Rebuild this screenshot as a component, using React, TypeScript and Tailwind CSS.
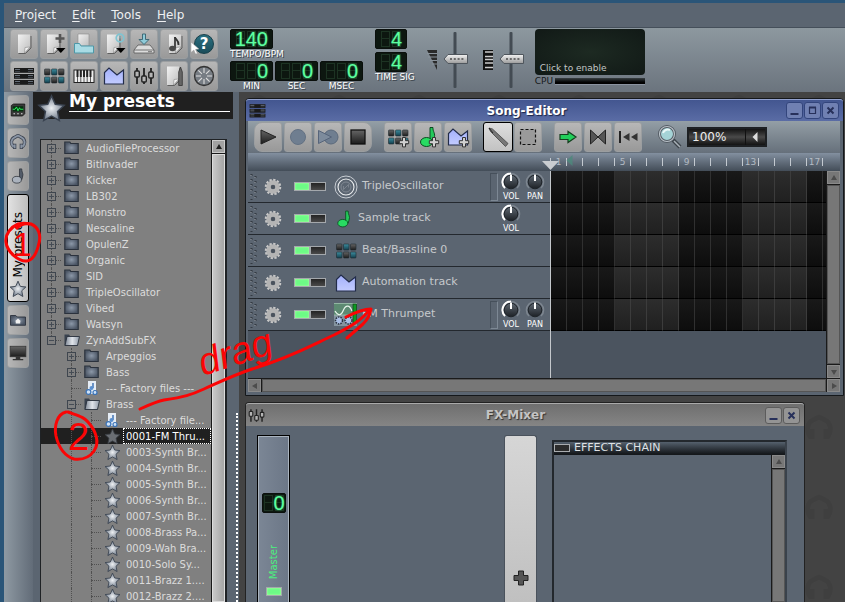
import type { ReactNode } from "react";
import clsx from "clsx";

/* ---------- shared gradients ---------- */

function Defs() {
  return (
    <svg className="absolute size-0" aria-hidden="true">
      <defs>
        <linearGradient id="paper" x1="0" y1="0" x2="1" y2="1">
          <stop offset="0" stopColor="#f2f2f2" />
          <stop offset="1" stopColor="#bdbdbd" />
        </linearGradient>
        <linearGradient id="lilac" x1="0" y1="0" x2="0" y2="1">
          <stop offset="0" stopColor="#a3b0fb" />
          <stop offset="1" stopColor="#c3ccff" />
        </linearGradient>
        <radialGradient id="steel">
          <stop offset="0" stopColor="#eef1f4" />
          <stop offset="1" stopColor="#707b8a" />
        </radialGradient>
        <radialGradient id="folder">
          <stop offset="0" stopColor="#8c98a8" />
          <stop offset="1" stopColor="#4c5665" />
        </radialGradient>
        <linearGradient id="folderOpen" x1="0" y1="0" x2="1" y2="0">
          <stop offset="0" stopColor="#7d8795" />
          <stop offset="0.5" stopColor="#e0e4ea" />
          <stop offset="1" stopColor="#8f99a7" />
        </linearGradient>
        <linearGradient id="thumb" x1="0" y1="0" x2="0" y2="1">
          <stop offset="0" stopColor="#f4f4f4" />
          <stop offset="1" stopColor="#9a9a9a" />
        </linearGradient>
        <linearGradient id="knob" x1="0" y1="0" x2="0" y2="1">
          <stop offset="0" stopColor="#5d6670" />
          <stop offset="1" stopColor="#1d2126" />
        </linearGradient>
        <linearGradient id="dark" x1="0" y1="0" x2="0" y2="1">
          <stop offset="0" stopColor="#666" />
          <stop offset="1" stopColor="#1c1c1c" />
        </linearGradient>
        <linearGradient id="teal" x1="0" y1="0" x2="0" y2="1">
          <stop offset="0" stopColor="#3e8ea0" />
          <stop offset="1" stopColor="#123e4c" />
        </linearGradient>
      </defs>
    </svg>
  );
}

/* ---------- icons ---------- */

function Svg({ size = 24, children }: { size?: number; children: ReactNode }) {
  return (
    <svg width={size} height={size} viewBox="0 0 24 24" fill="none" aria-hidden="true" className="shrink-0">
      {children}
    </svg>
  );
}

const Page = ({ x = 0 }: { x?: number }) => (
  <g transform={`translate(${x} 0)`}>
    <path d="M6.500 21.500h7l5.500-5.500v-12" stroke="#5f5f5f" strokeWidth="1" />
    <path d="M6 2.500h12v12.500l-5.500 6h-6.500z" fill="url(#paper)" />
    <path d="M12.500 21l.5-5.500 5-.5z" fill="#f0f0f0" stroke="#8a8a8a" strokeWidth=".6" />
  </g>
);

const DropArrow = () => <path d="M14 16h9.500l-4.700 5z" fill="#000" />;

const NewIcon = () => (
  <Svg>
    <Page />
  </Svg>
);

const TemplateIcon = () => (
  <Svg>
    <Page x={-1} />
    <path d="M18 2v9M13.500 6.500h9" stroke="#555" strokeWidth="2.600" />
    <DropArrow />
  </Svg>
);

const OpenIcon = () => (
  <Svg>
    <path d="M6 2h11v12h-11z" fill="url(#paper)" stroke="#8b8b8b" strokeWidth=".6" />
    <path d="M2.500 21v-9.500h5l1.500 2.500h12.500v7z" fill="#a9dbe4" stroke="#4d98a8" />
  </Svg>
);

const RecentIcon = () => (
  <Svg>
    <Page x={-1} />
    <circle cx="18" cy="6" r="3.800" stroke="#7fc4d2" strokeWidth="1.700" />
    <path d="M18 4v2.500" stroke="#7fc4d2" />
    <DropArrow />
  </Svg>
);

const SaveIcon = () => (
  <Svg>
    <path d="M6 13h12l4 5v3h-20v-3z" fill="#dcdcdc" stroke="#555" strokeWidth=".8" />
    <path d="M2 18h20M16 19.700h4" stroke="#666" strokeWidth=".9" />
    <path d="M10.500 2h3v5.500h3.500l-5 5-5-5h3.500z" fill="#8fcbd9" stroke="#35616e" strokeWidth=".9" />
  </Svg>
);

const ExportIcon = () => (
  <Svg>
    <Page x={1} />
    <path d="M13 5v11" stroke="#333" strokeWidth="1.700" />
    <path d="M13 5c0 2.500 4 3 3.500 8" stroke="#333" strokeWidth="1.800" />
    <ellipse cx="10.500" cy="16.500" rx="3.400" ry="2.700" fill="#4a4a4a" />
  </Svg>
);

const HelpIcon = () => (
  <div className="relative flex size-6 items-center justify-center">
    <div className="flex size-5 items-center justify-center rounded-full border border-[#173f49] bg-linear-to-b from-[#2a7081] to-[#1c4d5a] text-[15px] leading-none font-bold text-white">
      ?
    </div>
    <svg className="absolute -left-0.5 top-2.5" width="10" height="12" viewBox="0 0 10 12" aria-hidden="true">
      <path d="M1 0l8 7-3.500.5 2 4-2 .5-1.700-4-2.800 2.500z" fill="#fff" stroke="#999" strokeWidth=".5" />
    </svg>
  </div>
);

const SongIcon = ({ size = 24 }: { size?: number }) => (
  <Svg size={size}>
    {[4, 10, 16].map((y) => (
      <g key={y}>
        <rect x="2" y={y} width="20" height="4.800" fill="#1a1a1a" />
        <path d={`M3 ${y + 1.500}h5M16 ${y + 1.500}h5`} stroke="#666e78" strokeWidth="1.200" />
        <path d={`M3 ${y + 3.500}h5M16 ${y + 3.500}h5`} stroke="#3c424a" strokeWidth="1" />
      </g>
    ))}
  </Svg>
);

const PlusMark = () => (
  <path
    d="M16.500 12.500h3v3.200h3.200v3h-3.200v3.200h-3v-3.200h-3.200v-3h3.200z"
    fill="#d0d0d0"
    stroke="#333"
    strokeWidth="1"
  />
);

const BeatIcon = ({ plus = false }: { plus?: boolean }) => (
  <Svg>
    {[0, 1, 2].map((col) =>
      [0, 1].map((row) => (
        <rect
          key={`${col}${row}`}
          x={2.500 + col * 7}
          y={5 + row * 8}
          width="5.500"
          height="6"
          rx=".8"
          fill={(col + row) % 2 === 1 || (col === 2 && row === 1) ? "url(#teal)" : "url(#dark)"}
          stroke="#1f2a2f"
          strokeWidth=".6"
        />
      )),
    )}
    {plus && <PlusMark />}
  </Svg>
);

const PianoIcon = () => (
  <Svg>
    <rect x="2" y="6" width="20" height="12.500" fill="#eee" stroke="#222" />
    <path d="M5.500 6v12M8.800 6v12M12 6v12M15.200 6v12M18.500 6v12" stroke="#333" strokeWidth=".8" />
    <path d="M5.500 6v7M8.800 6v7M12 6v7M15.200 6v7M18.500 6v7" stroke="#222" strokeWidth="2" />
  </Svg>
);

const AutomationIcon = ({ plus = false }: { plus?: boolean }) => (
  <Svg>
    <path d="M2.500 20v-11.500l4.500-4.500 8 7 6.500-5v14z" fill="url(#lilac)" stroke="#222c4a" strokeWidth="1.200" />
    {plus && <PlusMark />}
  </Svg>
);

const MixerIcon = ({ size = 24 }: { size?: number }) => (
  <Svg size={size}>
    <path d="M5 4v16M12 4v16M19 4v16" stroke="#222" strokeWidth="1.800" />
    <rect x="2.800" y="7" width="4.500" height="6" rx="1" fill="#b5b5b5" stroke="#222" strokeWidth="1.400" />
    <rect x="9.800" y="12" width="4.500" height="6" rx="1" fill="#b5b5b5" stroke="#222" strokeWidth="1.400" />
    <rect x="16.800" y="8" width="4.500" height="6" rx="1" fill="#b5b5b5" stroke="#222" strokeWidth="1.400" />
  </Svg>
);

const NotesIcon = () => (
  <Svg>
    <Page x={-1} />
    <path d="M18.500 3l1.800 5v13.500h-3.600v-13.500z" fill="#666" stroke="#333" strokeWidth=".8" />
  </Svg>
);

const RackIcon = () => (
  <Svg>
    <circle cx="12" cy="12" r="9.500" fill="#777d84" stroke="#333" strokeWidth="1.300" />
    <path
      d="M12 4v5M12 15v5M4 12h5M15 12h5M6.300 6.300l3.600 3.600M14 14l3.600 3.600M17.600 6.300l-3.600 3.600M10 14l-3.600 3.600"
      stroke="#ddd"
      strokeWidth="1.100"
    />
  </Svg>
);

const STAR = "M12 1.500l3.100 7 7.400.8-5.500 5.100 1.500 7.600-6.500-3.800-6.500 3.800 1.500-7.600-5.500-5.100 7.400-.8z";

const StarIcon = ({ size = 18, dim = false }: { size?: number; dim?: boolean }) => (
  <Svg size={size}>
    <path d={STAR} fill={dim ? "#6a6e73" : "url(#steel)"} stroke={dim ? "#3a3e44" : "#3a4350"} strokeWidth="1.200" />
  </Svg>
);

const FolderIcon = ({ open = false }: { open?: boolean }) => (
  <svg width="16" height="16" viewBox="0 0 16 16" aria-hidden="true" className="shrink-0">
    {open ? (
      <>
        <path d="M.5 13.500v-11h4.500l1 1.500h8v9.500z" fill="#39424f" />
        <path d="M3 4.500h12.500l-2 9h-12.500z" fill="url(#folderOpen)" stroke="#2b323d" strokeWidth=".9" />
      </>
    ) : (
      <path d="M.8 13.500v-11.500h5l1 1.500h7.400v10z" fill="url(#folder)" stroke="#2b323d" strokeWidth="1.200" />
    )}
  </svg>
);

const FactoryIcon = () => (
  <svg width="16" height="16" viewBox="0 0 16 16" aria-hidden="true" className="shrink-0">
    <path d="M4 1h8v11l-2 2h-6z" fill="#e6edf6" />
    <path d="M9 3v5" stroke="#356bb0" strokeWidth="1.400" />
    <circle cx="7.500" cy="8" r="2" fill="#5b90cf" />
    <circle cx="4.500" cy="12" r="2.400" fill="#cfe2f7" stroke="#3a73b8" strokeWidth="1.200" />
    <circle cx="11" cy="12.500" r="2" fill="#cfe2f7" stroke="#3a73b8" strokeWidth="1.200" />
  </svg>
);

const Note = ({ green = false }: { green?: boolean }) => (
  <g stroke={green ? "#0b4a20" : "#2c323a"} strokeWidth="1">
    <path d="M14 2.500h3c-.5 4 3 6 1 11l-1 3.500h-3z" fill={green ? "#24c95a" : "#525b68"} />
    <ellipse cx="10.500" cy="17" rx="6" ry="4.500" fill={green ? "#28dc62" : "#aab2bd"} />
  </g>
);

const GearIcon = () => (
  <Svg size={18}>
    <circle cx="12" cy="12" r="9.500" stroke="#c9c9c9" strokeWidth="3" strokeDasharray="3 1.970" />
    <circle cx="12" cy="12" r="6" stroke="#b4b4b4" strokeWidth="6" />
    <circle cx="12" cy="12" r="2.800" fill="#4a525c" />
  </Svg>
);

const OscIcon = () => (
  <Svg>
    <circle cx="12" cy="12" r="11" stroke="#c9ced4" strokeWidth="1" />
    <circle cx="12" cy="12" r="8" stroke="#eceef0" strokeWidth="1.100" />
    <circle cx="12" cy="12" r="5" stroke="#89919a" strokeWidth=".8" />
    <path d="M9.500 14.500l5-5M9.500 11v3.500M14.500 9.500v3" stroke="#89919a" strokeWidth=".7" />
  </Svg>
);

const ZynIcon = () => (
  <Svg>
    <rect width="23" height="12" fill="#5d8a72" />
    <rect y="12" width="23" height="11" fill="#85949f" />
    <path d="M0 12h23M0 .5h23" stroke="#9fc0ae" strokeWidth=".8" />
    <path d="M1 8c3 5 6 5 8 0s6-8 9 0" stroke="#e8f5ec" strokeWidth="1.200" />
    <rect x="19" y="1" width="3.500" height="19" fill="#0d9b22" stroke="#0a3311" strokeWidth=".6" />
    <circle cx="5" cy="17.500" r="3.500" fill="#a9bfe6" stroke="#2b3442" strokeWidth="1.500" strokeDasharray="1.500 1" />
    <circle cx="14.500" cy="17.500" r="3.500" fill="#a9bfe6" stroke="#2b3442" strokeWidth="1.500" strokeDasharray="1.500 1" />
  </Svg>
);

const Headphones = () => (
  <g fill="none">
    <path
      d="M6 17c-5-5-2.500-11 1.500-12.500l4.500-2.500 4.500 2.500c4 1.500 6.500 7.500 1.500 12.500"
      stroke="#3c4350"
      strokeWidth="4.500"
    />
    <path d="M7.500 13v7M16.500 13v7" stroke="#3c4350" strokeWidth="4.500" />
    <path
      d="M6 17c-5-5-2.500-11 1.500-12.500l4.500-2.500 4.500 2.500c4 1.500 6.500 7.500 1.500 12.500"
      stroke="#8a95a5"
      strokeWidth="2.500"
    />
    <path d="M7.500 14v5M16.500 14v5" stroke="#8a95a5" strokeWidth="2.500" />
  </g>
);

/* ---------- small widgets ---------- */

function ToolButton({
  label,
  active,
  className,
  children,
}: {
  label: string;
  active?: boolean;
  className?: string;
  children: ReactNode;
}) {
  return (
    <button
      type="button"
      aria-label={label}
      className={clsx(
        "flex h-[30px] w-7 items-center justify-center rounded-[3px] border",
        active
          ? "border-black bg-linear-to-b from-[#dedede] to-[#c2c2c2]"
          : "border-[#9b9ea0] bg-linear-to-b from-[#b7b7b7] to-[#999]",
        className,
      )}
    >
      {children}
    </button>
  );
}

function Lcd({ value, digits, className }: { value: string; digits: number; className?: string }) {
  return (
    <div
      className={clsx(
        "relative flex h-5 items-center justify-center rounded-[2px] border border-[#0a0f0c] bg-[#0d1710]",
        className,
      )}
    >
      {Array.from({ length: digits }, (_, i) => (
        <div key={i} className="flex w-[11px] flex-col px-px">
          <div className="h-2 border border-[#1d3323]" />
          <div className="h-2 border border-t-0 border-[#1d3323]" />
        </div>
      ))}
      <div
        className={clsx(
          "absolute inset-0 flex items-center justify-end font-['Liberation_Sans'] text-[20px] leading-5 text-[#5dffa0] [text-shadow:0_0_2px_#2fb868]",
          digits === 2 && value === "0" ? "pr-0" : "pr-1",
        )}
      >
        {value}
      </div>
    </div>
  );
}

function LcdLabel({ children }: { children: ReactNode }) {
  return (
    <span className="text-center text-[9px] leading-[11px] text-white [text-shadow:1px_1px_0_#3c444c]">{children}</span>
  );
}

function VerticalSlider({ label }: { label: string }) {
  return (
    <label className="relative block h-14 w-[26px]">
      <svg width="26" height="56" viewBox="0 0 26 56" aria-hidden="true">
        <rect x="10.500" y="0" width="3" height="56" rx="1" fill="#434b53" />
        <path d="M1 27l4-4.500h19.500v9h-19.500z" fill="url(#thumb)" stroke="#4f565d" strokeWidth="1" />
        <path d="M7 27h14" stroke="#6a6a6a" strokeWidth="2" strokeDasharray="2 1.800" />
      </svg>
      <input type="range" aria-label={label} className="absolute inset-0 h-full w-full opacity-0" />
    </label>
  );
}

function Led({ label, on }: { label: string; on?: boolean }) {
  return (
    <input
      type="checkbox"
      aria-label={label}
      defaultChecked={on}
      className="h-[9px] w-4 appearance-none border border-[#a4a8ac] bg-linear-to-b from-[#242424] to-[#4a4a4a] checked:bg-none checked:bg-[#6dfb86] checked:shadow-[inset_0_0_2px_#c8ffb0]"
    />
  );
}

function Knob({ label, full }: { label: string; full?: boolean }) {
  return (
    <label className="relative flex w-6 flex-col items-center">
      <svg width="20" height="20" viewBox="0 0 20 20" fill="none" aria-hidden="true">
        <path d="M4 16a8.500 8.500 0 1 1 12 0" stroke="#7d8690" strokeWidth="1.600" />
        {full && <path d="M4 16a8.500 8.500 0 0 1 6-14.500" stroke="#fff" strokeWidth="2" />}
        <circle cx="10" cy="10" r="6.800" fill="url(#knob)" stroke="#1f2429" />
        <path d="M10 2.500v6.500" stroke="#fff" strokeWidth="2" />
      </svg>
      <span className="text-[8px] leading-[9px] text-white">{label}</span>
      <input type="range" aria-label={label} className="absolute inset-0 h-full w-full opacity-0" />
    </label>
  );
}

function ScrollButton({ dir, dim }: { dir: "up" | "down" | "left" | "right"; dim?: boolean }) {
  const paths = {
    up: "M3 8h6l-3-5z",
    down: "M3 4h6l-3 5z",
    left: "M8 3v6l-5-3z",
    right: "M4 3v6l5-3z",
  };
  return (
    <button
      type="button"
      aria-label={`Scroll ${dir}`}
      className={clsx(
        "flex size-[13px] shrink-0 items-center justify-center border",
        dim ? "border-[#8a8a8a] bg-[#777]" : "border-[#ccc] bg-[#a2a2a2]",
      )}
    >
      <svg width="12" height="12" viewBox="0 0 12 12" aria-hidden="true" className="shrink-0">
        <path d={paths[dir]} fill={dim ? "#4c4c4c" : "#222"} />
      </svg>
    </button>
  );
}

function WindowButton({ label, blue, children }: { label: string; blue?: boolean; children: ReactNode }) {
  return (
    <button
      type="button"
      aria-label={label}
      className={clsx(
        "flex size-[17px] items-center justify-center rounded-[3px] border",
        blue ? "border-[#33457c] bg-[#7080b2]" : "border-[#5c5c5c] bg-[#949494]",
      )}
    >
      <svg width="11" height="11" viewBox="0 0 11 11" fill="none" stroke="#27305a" strokeWidth="2" aria-hidden="true">
        {children}
      </svg>
    </button>
  );
}

const MinimizeGlyph = <path d="M1.500 9h8" />;
const MaximizeGlyph = (
  <>
    <path d="M2.500 2.500h6v6h-6z" strokeWidth="1.200" />
    <path d="M2 2.500h7" />
  </>
);
const CloseGlyph = <path d="M2.500 2.500l6 6M8.500 2.500l-6 6" />;

/* ---------- top of the main window ---------- */

function MenuBar() {
  return (
    <nav className="flex h-[25px] items-center gap-4 border-b border-[#454f5a] bg-[#5b6571] px-[11px] text-[12px]">
      {["Project", "Edit", "Tools", "Help"].map((item) => (
        <button key={item} type="button" className="leading-4 text-[#eef0f2]">
          <span className="underline underline-offset-2">{item[0]}</span>
          {item.slice(1)}
        </button>
      ))}
    </nav>
  );
}

const PROJECT_TOOLS: [string, ReactNode][] = [
  ["New project", <NewIcon />],
  ["New from template", <TemplateIcon />],
  ["Open project", <OpenIcon />],
  ["Recent projects", <RecentIcon />],
  ["Save project", <SaveIcon />],
  ["Export project", <ExportIcon />],
  ["What's this?", <HelpIcon />],
  ["Song editor", <SongIcon />],
  ["Beat editor", <BeatIcon />],
  ["Piano roll", <PianoIcon />],
  ["Automation editor", <AutomationIcon />],
  ["Mixer", <MixerIcon />],
  ["Project notes", <NotesIcon />],
  ["Controller rack", <RackIcon />],
];

function MainToolbar() {
  return (
    <header className="flex h-16 shrink-0 items-start bg-linear-to-b from-[#8d989f] to-[#6b747e] pt-px pl-1.5">
      <div className="grid grid-cols-7 gap-x-0.5 gap-y-0.5">
        {PROJECT_TOOLS.map(([label, icon]) => (
          <ToolButton key={label} label={label}>
            {icon}
          </ToolButton>
        ))}
      </div>

      <div className="ml-3 flex flex-col">
        <div className="flex h-8 flex-col items-start">
          <Lcd value="140" digits={3} className="w-[43px]" />
          <LcdLabel>TEMPO/BPM</LcdLabel>
        </div>
        <div className="flex gap-0.5">
          {["MIN", "SEC", "MSEC"].map((unit) => (
            <div key={unit} className="flex flex-col">
              <Lcd value="0" digits={3} className="w-[43px]" />
              <LcdLabel>{unit}</LcdLabel>
            </div>
          ))}
        </div>
      </div>

      <div className="ml-3 flex flex-col items-start">
        <Lcd value="4" digits={2} className="mb-[3px] w-8" />
        <Lcd value="4" digits={2} className="w-8" />
        <LcdLabel>TIME SIG</LcdLabel>
      </div>

      <div className="ml-3 flex items-center gap-1.5 pt-[3px]">
        <svg width="10" height="20" viewBox="0 0 10 20" aria-hidden="true">
          <path d="M0 0h10v20z" fill="#2a2a2a" />
          <path d="M0 3.500h10M1 7h9M3 10.500h7M5 14h5" stroke="#8a939b" strokeWidth="1" />
        </svg>
        <VerticalSlider label="Master volume" />
      </div>
      <div className="ml-3.5 flex items-center gap-1.5 pt-[3px]">
        <svg width="10" height="20" viewBox="0 0 10 20" aria-hidden="true">
          <rect width="10" height="20" fill="#111" />
          <path d="M0 2h10M0 6.500h10M0 9.500h10M0 13h10M0 17.500h10" stroke="#ccc" strokeWidth="1.400" />
          <path d="M0 0v20" stroke="#111" strokeWidth="4" />
        </svg>
        <VerticalSlider label="Master pitch" />
      </div>

      <div className="ml-2.5 flex w-[110px] flex-col">
        <button
          type="button"
          className="flex h-[46px] items-end rounded-[4px] bg-radial from-[#1d2a22] to-[#111916] px-[5px] text-[9px] text-[#c3c7c5]"
        >
          Click to enable
        </button>
        <div className="mt-px flex items-center gap-0.5">
          <span className="text-[9px] leading-[11px] text-[#15181b]">CPU</span>
          <div className="h-[7px] flex-1 border-b border-[#8a93a0] bg-linear-to-b from-[#3a4144] to-black" />
        </div>
      </div>
    </header>
  );
}

/* ---------- side bar ---------- */

function SideTabs() {
  const tab =
    "flex h-[30px] w-[22px] items-center justify-center rounded-[3px] border border-[#9b9ea0] bg-linear-to-r from-[#b7b7b7] to-[#999]";
  return (
    <aside className="flex w-[29px] shrink-0 flex-col gap-[3px] bg-linear-to-r from-[#8f9aa3] to-[#626c78] pt-[3px] pl-[3px]">
      <button type="button" aria-label="Instruments" className={tab}>
        <Svg size={18}>
          <path d="M3 6l3-2h15v13l-3 3h-15z" fill="#3a3a3a" stroke="#111" />
          <rect x="5" y="7" width="14" height="7" fill="#06300f" />
          <path d="M5 11h3l2-3 2 5 2-4 1 2h4" stroke="#2fff62" strokeWidth="1.200" />
          <path d="M6 17h2M11 17h2M16 17h2" stroke="#ddd" strokeWidth="1.500" />
        </Svg>
      </button>
      <button type="button" aria-label="My samples" className={tab}>
        <Svg size={18}>
          <Headphones />
        </Svg>
      </button>
      <button type="button" aria-label="My projects" className={tab}>
        <Svg size={18}>
          <Note />
        </Svg>
      </button>
      <button
        type="button"
        className="flex h-[108px] w-[22px] flex-col items-center justify-end gap-0.5 rounded-[3px] border border-black bg-linear-to-r from-[#e2e2e2] to-[#bebebe] pb-[3px] text-[12px] text-black"
      >
        <span className="rotate-180 leading-4 whitespace-nowrap [writing-mode:vertical-rl]">My presets</span>
        <StarIcon />
      </button>
      <button type="button" aria-label="Home" className={tab}>
        <Svg size={18}>
          <path d="M2 19v-13h7l2 2h11v11z" fill="url(#folder)" stroke="#2b323d" strokeWidth="1.200" />
          <path d="M12 10l4 3.500h-1v3h-6v-3h-1z" fill="#f0f0f0" />
        </Svg>
      </button>
      <button type="button" aria-label="Computer" className={tab}>
        <Svg size={18}>
          <rect x="1.500" y="3" width="21" height="14" fill="url(#dark)" stroke="#333" />
          <path d="M9 17h6v3h4v1.500h-14v-1.500h4z" fill="#333" />
        </Svg>
      </button>
    </aside>
  );
}

type Node = {
  name: string;
  depth: 1 | 2 | 3;
  kind: "folder" | "open" | "factory" | "preset";
  selected?: boolean;
  last?: boolean;
};

const PRESETS: Node[] = [
  ...[
    "AudioFileProcessor",
    "BitInvader",
    "Kicker",
    "LB302",
    "Monstro",
    "Nescaline",
    "OpulenZ",
    "Organic",
    "SID",
    "TripleOscillator",
    "Vibed",
    "Watsyn",
  ].map((name): Node => ({ name, depth: 1, kind: "folder" })),
  { name: "ZynAddSubFX", depth: 1, kind: "open", last: true },
  { name: "Arpeggios", depth: 2, kind: "folder" },
  { name: "Bass", depth: 2, kind: "folder" },
  { name: "--- Factory files ---", depth: 2, kind: "factory" },
  { name: "Brass", depth: 2, kind: "open" },
  { name: "--- Factory file...", depth: 3, kind: "factory" },
  { name: "0001-FM Thru...", depth: 3, kind: "preset", selected: true },
  ...[
    "0003-Synth Br...",
    "0004-Synth Br...",
    "0005-Synth Br...",
    "0006-Synth Br...",
    "0007-Synth Br...",
    "0008-Brass Pa...",
    "0009-Wah Bra...",
    "0010-Solo Sy...",
    "0011-Brazz 1....",
    "0012-Brazz 2....",
  ].map((name): Node => ({ name, depth: 3, kind: "preset" })),
];

function TreeRow({ node }: { node: Node }) {
  const expandable = node.kind === "folder" || node.kind === "open";
  return (
    <li className={clsx("flex h-4 items-center", node.selected && "bg-[#202020]")}>
      {/* guide lines of the parent levels */}
      {node.depth > 1 && <span className="w-5 shrink-0" />}
      {node.depth > 2 && (
        <span className="flex h-4 w-5 shrink-0 justify-center">
          <span className="h-4 border-l border-dotted border-[#505050]" />
        </span>
      )}
      <span className="relative flex h-4 w-5 shrink-0 items-center justify-center">
        <span
          className={clsx("absolute top-0 left-2.5 border-l border-dotted border-[#505050]", node.last ? "h-2" : "h-4")}
        />
        <span className="absolute top-2 right-0 left-2.5 border-t border-dotted border-[#505050]" />
        {expandable && (
          <button
            type="button"
            aria-label={node.kind === "open" ? `Collapse ${node.name}` : `Expand ${node.name}`}
            className="relative flex size-[9px] items-center justify-center border border-[#3f464f] bg-[#808080]"
          >
            <span className="absolute h-px w-[5px] bg-[#454c55]" />
            {node.kind === "folder" && <span className="absolute h-[5px] w-px bg-[#454c55]" />}
          </button>
        )}
      </span>
      <span className="ml-[3px] flex w-4 shrink-0 justify-center">
        {node.kind === "preset" && <StarIcon size={17} dim={node.selected} />}
        {node.kind === "factory" && <FactoryIcon />}
        {expandable && <FolderIcon open={node.kind === "open"} />}
      </span>
      <span
        className={clsx(
          "ml-[3px] flex h-4 flex-1 items-center overflow-hidden px-[3px] whitespace-nowrap",
          node.selected ? "text-white outline-1 -outline-offset-1 outline-white outline-dotted" : "text-[#dcdcdc]",
        )}
      >
        {node.name}
      </span>
    </li>
  );
}

function PresetBrowser() {
  return (
    <section className="flex min-h-0 w-[206px] shrink-0 flex-col bg-[#5b6571] pr-1.5">
      <div className="flex h-[27px] items-start bg-[#202020] pr-[3px] pl-1">
        <span className="mt-0.5">
          <StarIcon size={29} />
        </span>
        <h2 className="ml-[3px] flex-1 border-b border-white text-[17px] leading-[19px] font-bold text-white">
          My presets
        </h2>
      </div>
      <div className="mt-5 mr-1.5 ml-[7px] flex min-h-0 flex-1 border-t border-r-2 border-l border-[#1f2225] bg-[#808080]">
        <ul className="min-w-0 flex-1 overflow-hidden text-[10px]">
          {PRESETS.map((node) => (
            <TreeRow key={node.name} node={node} />
          ))}
        </ul>
        <div className="flex w-[14px] flex-col border-l border-[#1a1a1a] bg-[#1a1a1a]">
          <ScrollButton dir="up" />
          <div className="mt-px flex-1 border border-[#ddd] bg-linear-to-r from-[#c9c9c9] to-[#a5a5a5]" />
        </div>
      </div>
    </section>
  );
}

/* ---------- song editor ---------- */

function TransportBar() {
  return (
    <div className="flex h-8 items-center bg-linear-to-b from-[#949fa6] to-[#66707b] pl-1.5">
      <div className="flex gap-0.5">
        <ToolButton label="Play" className="rounded-l-[8px]">
          <Svg>
            <path d="M5 5l15 7-15 7z" fill="url(#dark)" stroke="#222" />
          </Svg>
        </ToolButton>
        <ToolButton label="Record">
          <Svg>
            <circle cx="12" cy="12" r="7.500" fill="#6f7e90" stroke="#637183" />
          </Svg>
        </ToolButton>
        <ToolButton label="Record while playing">
          <Svg>
            <circle cx="15" cy="12" r="7" fill="#6f7e90" stroke="#5c6a7c" />
            <path d="M2.500 5.500l13 6.500-13 6.500z" fill="#7d8b9c" stroke="#56647a" />
          </Svg>
        </ToolButton>
        <ToolButton label="Stop" className="rounded-r-[8px]">
          <Svg>
            <rect x="5" y="5" width="14" height="14" fill="url(#dark)" stroke="#111" strokeWidth="1.300" />
          </Svg>
        </ToolButton>
      </div>
      <div className="ml-3 flex gap-0.5">
        <ToolButton label="Add beat/bassline">
          <BeatIcon plus />
        </ToolButton>
        <ToolButton label="Add sample track">
          <Svg>
            <Note green />
            <PlusMark />
          </Svg>
        </ToolButton>
        <ToolButton label="Add automation track">
          <AutomationIcon plus />
        </ToolButton>
      </div>
      <div className="ml-[11px] flex gap-px">
        <ToolButton label="Draw mode" active className="w-[30px]">
          <Svg>
            <path d="M3 3l3.500 1 15.500 14.500-2.500 3-15-15z" fill="#777" stroke="#444" strokeWidth=".8" />
            <path d="M3 3l4 5" stroke="#222" />
          </Svg>
        </ToolButton>
        <ToolButton label="Edit mode">
          <Svg>
            <path d="M4.500 4.500h15v15h-15z" fill="#9a9a9a" stroke="#111" strokeWidth="1.200" strokeDasharray="3 2" />
          </Svg>
        </ToolButton>
      </div>
      <div className="ml-3 flex gap-0.5">
        <ToolButton label="Auto-scroll">
          <Svg>
            <path d="M4 9.500h8v-3l8 5.500-8 5.500v-3h-8z" fill="#21cf5b" stroke="#14401f" strokeWidth="1.200" />
          </Svg>
        </ToolButton>
        <ToolButton label="Loop points">
          <Svg>
            <path d="M4.500 5l7.500 7-7.500 7zM19.500 5l-7.500 7 7.500 7z" fill="#555" stroke="#222" />
          </Svg>
        </ToolButton>
        <ToolButton label="Back to start">
          <Svg>
            <path d="M4 6v12" stroke="#222" strokeWidth="2" />
            <path d="M13.500 8v8l-6.500-4zM21.500 8v8l-6.500-4z" fill="#333" />
          </Svg>
        </ToolButton>
      </div>
      <svg className="ml-4 shrink-0" width="24" height="24" viewBox="0 0 24 24" fill="none" aria-hidden="true">
        <path d="M15 15l7 7" stroke="#3d444b" strokeWidth="4" />
        <path d="M16 16l6 6" stroke="#a9b1b8" strokeWidth="1.500" />
        <circle cx="9" cy="9" r="7.500" fill="#a5d3d6" stroke="#535b63" strokeWidth="3" />
        <circle cx="9" cy="9" r="7.500" stroke="#b9c1c8" strokeWidth="1.200" />
        <path d="M5 8c1-3 4-4 7-3" stroke="#e9f7f7" strokeWidth="2" />
      </svg>
      <div className="relative ml-[5px] flex h-5 w-20 items-center border-2 border-[#1d2023] bg-linear-to-b from-[#141414] via-[#4a4a4a] to-[#141414]">
        <select aria-label="Zoom" className="h-full w-full appearance-none pl-[3px] text-[12px] leading-4 text-[#ececec]">
          <option>100%</option>
        </select>
        <svg className="pointer-events-none absolute right-0" width="20" height="16" viewBox="0 0 20 16" aria-hidden="true">
          <path d="M.5 0v16" stroke="#111" />
          <path d="M12.500 3v10l-5-5z" fill="#ddd" />
        </svg>
      </div>
    </div>
  );
}

const BARS = Array.from({ length: 18 }, (_, i) => i);

function Timeline() {
  return (
    <div className="flex h-[18px] bg-linear-to-b from-[#8390a0] to-[#434d58]">
      <div className="w-[302px] shrink-0" />
      <div className="relative flex min-w-0 flex-1 items-center overflow-hidden">
        {BARS.map((bar) => (
          <div
            key={bar}
            className="flex h-2 w-4 shrink-0 items-center justify-center border-l border-[#c3c9d0] text-[9px] leading-none text-[#b4bcc5]"
          >
            {bar % 4 === 0 && bar + 1}
          </div>
        ))}
        <svg className="absolute top-0.5 left-4" width="8" height="11" viewBox="0 0 8 11" aria-hidden="true">
          <path d="M6.500 0v11l-6-5.500z" fill="#4c8a7c" opacity=".8" />
        </svg>
      </div>
    </div>
  );
}

type Track = { name: string; icon: ReactNode; vol?: boolean; pan?: boolean };

const TRACKS: Track[] = [
  { name: "TripleOscillator", icon: <OscIcon />, vol: true, pan: true },
  {
    name: "Sample track",
    icon: (
      <Svg size={20}>
        <Note green />
      </Svg>
    ),
    vol: true,
  },
  { name: "Beat/Bassline 0", icon: <BeatIcon /> },
  { name: "Automation track", icon: <AutomationIcon /> },
  { name: "FM Thrumpet", icon: <ZynIcon />, vol: true, pan: true },
];

function TrackRow({ track }: { track: Track }) {
  return (
    <div className="flex h-8">
      <div className="flex w-[302px] shrink-0 items-center border-b border-[#23282e] bg-[#5b6571]">
        <svg className="ml-0.5 shrink-0" width="7" height="26" viewBox="0 0 7 26" aria-hidden="true">
          <path d="M1.500 0v26" stroke="#343b43" strokeWidth="2" strokeDasharray="2 3" />
          <path d="M5.500 2v24" stroke="#343b43" strokeWidth="2" strokeDasharray="2 3" />
          <path d="M1 1v25M5 3v23" stroke="#a6adb5" strokeWidth="1" strokeDasharray="1 4" />
        </svg>
        <button type="button" aria-label={`${track.name} actions`} className="ml-[7px]">
          <GearIcon />
        </button>
        <div className="ml-3 flex">
          <Led label={`Mute ${track.name}`} on />
          <Led label={`Solo ${track.name}`} />
        </div>
        <button
          type="button"
          className="ml-2 flex flex-1 items-center gap-1 text-left text-[11px] whitespace-nowrap text-[#c6c9cc]"
        >
          {track.icon}
          {track.name}
        </button>
        {track.pan && <div className="mr-px h-7 w-2 border border-[#46505b] border-r-[#7d8894] border-b-[#7d8894]" />}
        {track.vol && <Knob label="VOL" full />}
        {track.pan ? <Knob label="PAN" /> : <div className="w-6" />}
        <div className="w-[3px] shrink-0" />
      </div>
      <div className="flex min-w-0 flex-1 overflow-hidden border-l border-[#c4c8cc]">
        {BARS.map((bar) => (
          <div
            key={bar}
            className={clsx(
              "h-8 w-4 shrink-0 border-r border-b border-b-black bg-linear-to-b",
              Math.floor(bar / 4) % 2 === 0
                ? "border-r-[#303030] from-[#191919] to-[#0d0d0d]"
                : "border-r-[#3c3c3c] from-[#2d2d2d] to-[#202020]",
            )}
          />
        ))}
      </div>
    </div>
  );
}

function SongEditor() {
  return (
    <section className="absolute top-1.5 left-1.5 flex h-[298px] w-[599px] flex-col rounded-t-[4px] border border-[#15181b] bg-[#5b6571]">
      <header className="flex h-[22px] items-center rounded-t-[3px] border-t border-[#93a2cf] bg-linear-to-b from-[#435690] to-[#5a6ca5] pr-1 pl-0.5">
        <SongIcon size={19} />
        <h2 className="flex-1 text-center text-[12px] leading-4 font-bold text-white [text-shadow:1px_1px_1px_#1a2347]">
          Song-Editor
        </h2>
        <div className="flex gap-px">
          <WindowButton label="Minimize" blue>
            {MinimizeGlyph}
          </WindowButton>
          <WindowButton label="Maximize" blue>
            {MaximizeGlyph}
          </WindowButton>
          <WindowButton label="Close" blue>
            {CloseGlyph}
          </WindowButton>
        </div>
      </header>
      <div className="mr-[3px] mb-[3px] ml-0.5 flex min-h-0 flex-1 flex-col">
        <TransportBar />
        <Timeline />
        <div className="relative flex min-h-0 flex-1 bg-[#4b545f]">
          <div className="min-w-0 flex-1">
            {TRACKS.map((track) => (
              <TrackRow key={track.name} track={track} />
            ))}
          </div>
          {/* playhead */}
          <div className="absolute inset-y-0 left-[302px] w-px bg-[#c4c8cc]" />
          <svg className="absolute -top-2.5 left-[294px]" width="17" height="9" viewBox="0 0 17 9" aria-hidden="true">
            <path d="M0 0h17l-8.500 9z" fill="#c9ccd0" />
          </svg>
          <div className="flex w-[14px] flex-col border-l border-[#1a1a1a] bg-[#1a1a1a]">
            <ScrollButton dir="up" dim />
            <div className="my-px flex-1 border border-[#555] bg-[#777]" />
            <ScrollButton dir="down" dim />
          </div>
        </div>
        <div className="flex h-[14px] border-t border-[#1a1a1a] bg-[#1a1a1a]">
          <ScrollButton dir="left" dim />
          <div className="mx-px flex-1 border border-[#555] bg-[#777]" />
          <ScrollButton dir="right" dim />
        </div>
      </div>
    </section>
  );
}

/* ---------- mixer ---------- */

function FxMixer() {
  return (
    <section className="absolute top-[310px] bottom-0 left-1.5 flex w-[560px] flex-col rounded-t-[4px] border border-b-0 border-[#222] bg-[#5b6571]">
      <header className="flex h-[23px] shrink-0 items-center rounded-t-[3px] border-t border-[#aaa] bg-linear-to-b from-[#6f6f6f] to-[#858585] pr-1 pl-px">
        <MixerIcon size={19} />
        <h2 className="flex-1 text-center text-[12px] leading-4 font-bold text-[#c4c4c4] [text-shadow:1px_1px_1px_#333]">
          FX-Mixer
        </h2>
        <div className="flex gap-px">
          <WindowButton label="Minimize">{MinimizeGlyph}</WindowButton>
          <WindowButton label="Close">{CloseGlyph}</WindowButton>
        </div>
      </header>
      <div className="flex min-h-0 flex-1 items-stretch pt-[9px] pr-[17px] pl-[11px]">
        <div className="w-[33px] border border-b-0 border-black">
          <div className="flex h-full flex-col items-center border border-b-0 border-[#aab4bf] bg-linear-to-r from-[#7b8695] to-[#6c7787] pt-14">
            <Lcd value="0" digits={2} className="w-6" />
            <span className="mt-8 rotate-180 text-[10px] leading-3 text-[#4bf07e] [writing-mode:vertical-rl]">Master</span>
            <span className="mt-2 flex">
              <Led label="Mute Master" on />
            </span>
          </div>
        </div>
        <div className="flex-1" />
        <button
          type="button"
          aria-label="Add channel"
          className="flex w-[33px] items-start justify-center rounded-t-[3px] border border-b-0 border-[#4a525c] bg-linear-to-b from-[#d6d6d6] to-[#c0c0c0] pt-[134px]"
        >
          <svg width="16" height="16" viewBox="0 0 16 16" aria-hidden="true">
            <path d="M5.500 1h5v4.500h4.500v5h-4.500v4.500h-5v-4.500h-4.500v-5h4.500z" fill="#555" stroke="#222" />
          </svg>
        </button>
        <div className="mt-[5px] ml-[15px] flex w-[235px] flex-col border-t-2 border-r-2 border-l-2 border-[#23282d] border-r-[#3a424b]">
          <label className="flex h-[13px] shrink-0 items-center gap-1 border-b border-[#15181b] bg-linear-to-b from-[#55616d] to-[#15181c] text-[11px] leading-3 text-[#dfe2e5]">
            <input
              type="checkbox"
              className="h-2 w-4 appearance-none border border-[#a9acaf] bg-[#2c2c2c] checked:bg-[#6dfb86]"
            />
            EFFECTS CHAIN
          </label>
          <div className="flex flex-1 justify-end">
            <div className="flex w-[14px] flex-col border-l border-[#1a1a1a] bg-[#1a1a1a]">
              <ScrollButton dir="up" dim />
              <div className="mt-px flex-1 border border-[#555] bg-[#777]" />
            </div>
          </div>
        </div>
      </div>
    </section>
  );
}

function Workspace() {
  return (
    <main className="relative min-w-0 flex-1 overflow-hidden bg-[#434343]">
      <svg className="absolute inset-0 h-full w-full" aria-hidden="true">
        <defs>
          <pattern id="phones" width="80" height="80" x="566" y="2" patternUnits="userSpaceOnUse">
            <path
              d="M6 24c-6-8-3-16 2-18l6-3 6 3c5 2 8 10 2 18M7 15v10M21 15v10"
              fill="none"
              stroke="#3f3f3f"
              strokeWidth="5"
            />
          </pattern>
        </defs>
        <rect width="100%" height="100%" fill="url(#phones)" />
      </svg>
      <SongEditor />
      <FxMixer />
    </main>
  );
}

/* ---------- hand-drawn notes on top ---------- */

function Annotations() {
  return (
    <div className="pointer-events-none absolute -top-[3px] -left-1 font-['Liberation_Sans'] text-[#fb0505]">
      <svg
        width="400"
        height="480"
        viewBox="0 0 400 480"
        fill="none"
        stroke="#fb0505"
        strokeWidth="3"
        strokeLinecap="round"
        strokeLinejoin="round"
        aria-hidden="true"
      >
        <path d="M17 228c4-4 10-5 14-4 8 3 10 12 8 19-2 9-6 17-12 18-8 1-20-9-21-19-1-8 5-15 12-18 4-1 8-1 11 0" />
        <path d="M66 412c-9 2-12 14-10 24 3 13 9 20 18 23 8 1 15-1 20-8 6-9 2-20-6-29-4-5-9-6-20-10" />
        <path d="M140 409c13-6 18-8 24-9 20-3 27-5 40-11 20-9 30-14 48-20 40-12 60-24 82-34 16-8 28-15 35-25M346 317c10-5 18-8 25-8-1 6-4 11-8 15l-16 14" />
      </svg>
      <span className="absolute top-[226px] left-[13px] text-[34px] leading-9">1</span>
      <span className="absolute top-[419px] left-[68px] text-[38px] leading-9">2</span>
      <span className="absolute top-[334px] left-[197px] -rotate-18 text-[38px] leading-9 italic">drag</span>
    </div>
  );
}

export default function App() {
  return (
    <div className="relative flex h-screen flex-col overflow-hidden border-t-3 border-l-4 border-[#2a5578] bg-[#5b6571] font-['DejaVu_Sans',sans-serif]">
      <Defs />
      <MenuBar />
      <MainToolbar />
      <div className="flex min-h-0 flex-1">
        <SideTabs />
        <PresetBrowser />
        <Workspace />
      </div>
      {/* splitter handle */}
      <div className="absolute top-[410px] bottom-0 left-[232px] border-l-2 border-dotted border-white" />
      <Annotations />
    </div>
  );
}
